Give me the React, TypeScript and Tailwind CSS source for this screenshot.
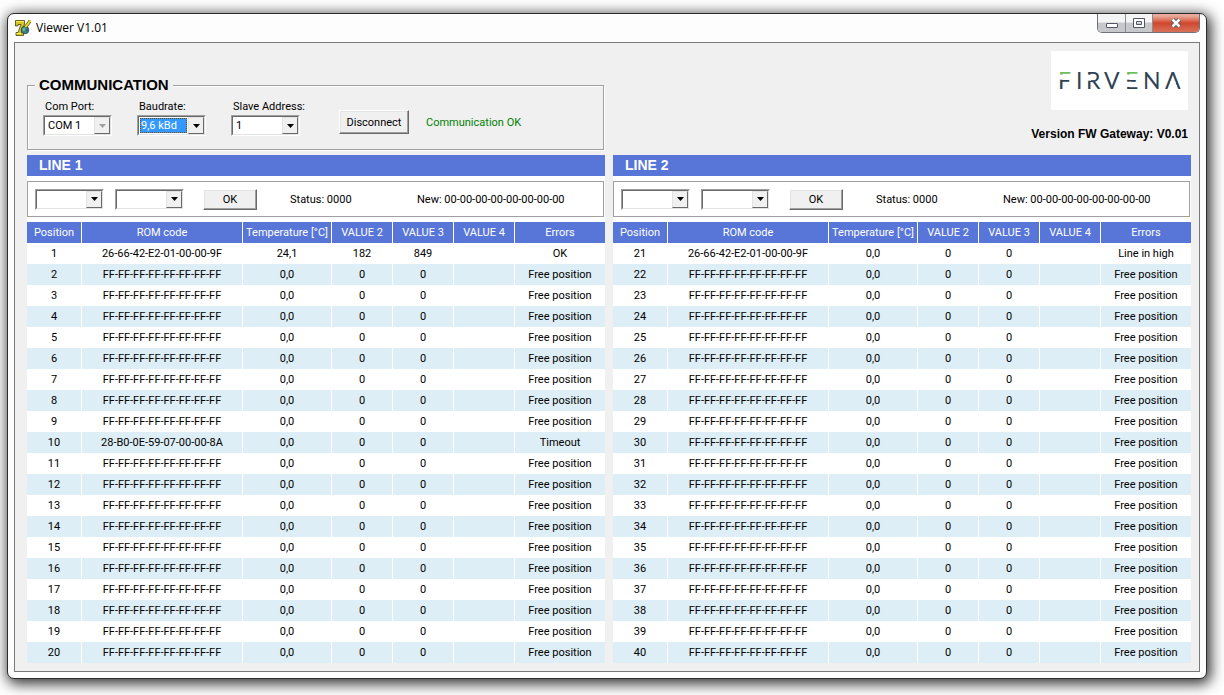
import type { ReactNode } from "react";
import clsx from "clsx";

type Row = {
  position: number;
  rom: string;
  temperature: string;
  value2: string;
  value3: string;
  error: string;
};

const emptyRow = (position: number): Row => ({
  position,
  rom: "FF-FF-FF-FF-FF-FF-FF-FF",
  temperature: "0,0",
  value2: "0",
  value3: "0",
  error: "Free position",
});

const makeRows = (first: number, known: Partial<Row>[]): Row[] =>
  Array.from({ length: 20 }, (_, i) => ({
    ...emptyRow(first + i),
    ...known.find((row) => row.position === first + i),
  }));

const line1 = makeRows(1, [
  {
    position: 1,
    rom: "26-66-42-E2-01-00-00-9F",
    temperature: "24,1",
    value2: "182",
    value3: "849",
    error: "OK",
  },
  { position: 10, rom: "28-B0-0E-59-07-00-00-8A", error: "Timeout" },
]);

const line2 = makeRows(21, [
  { position: 21, rom: "26-66-42-E2-01-00-00-9F", error: "Line in high" },
]);

const columns = [
  { label: "Position", width: "w-[55px]" },
  { label: "ROM code", width: "w-[161px]" },
  { label: "Temperature [°C]", width: "w-[89px]" },
  { label: "VALUE 2", width: "w-[61px]" },
  { label: "VALUE 3", width: "w-[61px]" },
  { label: "VALUE 4", width: "w-[61px]" },
  { label: "Errors", width: "" },
];

const AppIcon = () => (
  <svg className="w-4 h-4" viewBox="0 0 16 16">
    <path
      d="M0.5 0.5H9.500V4L6.500 12.500H8.500V15.500H1V12.500H3L6 4.500H3V6H0.5Z"
      fill="#d9c51f"
      stroke="#4a4310"
      strokeWidth="0.8"
    />
    <path d="M1 1.500H9M1.500 13.500H6" stroke="#f6ee58" />
    <circle cx="10" cy="10" r="3.8" fill="#3d8a80" stroke="#1c3f45" strokeWidth="0.8" />
    <path d="M7.500 9L9.500 7.500L10 10L8.500 11Z" fill="#7cc4a0" />
    <path d="M10.500 9.500L12.500 9L12 12Z" fill="#2b4f8c" />
    <path d="M10.500 7L15.500 0.500" stroke="#4a4310" strokeWidth="3.2" />
    <path d="M10.500 7L15.500 0.500" stroke="#f0e02c" strokeWidth="2" />
  </svg>
);

const Logo = () => (
  <svg
    className="w-[137px] h-[59px] bg-white"
    viewBox="0 0 137 59"
    role="img"
    aria-label="Firvena"
  >
    <defs>
      <linearGradient id="bars" gradientUnits="userSpaceOnUse" x1="0" y1="0" x2="0" y2="59">
        <stop offset="0.43" stopColor="#6fbe5c" />
        <stop offset="0.43" stopColor="#2f4254" />
      </linearGradient>
    </defs>
    <text
      x="7 25 35 53 74 92 114"
      y="38"
      fontFamily="Lato, sans-serif"
      fontSize="23"
      fill="#2f4254"
    >
      <tspan fill="url(#bars)">F</tspan>IRV
      <tspan fill="url(#bars)">E</tspan>NA
    </text>
    {/* gaps that split the F, R and E into bars and open the A */}
    <g fill="#fff">
      <rect x="8" y="23.7" width="5" height="5" />
      <rect x="36" y="23.7" width="4" height="6" />
      <rect x="75" y="23.7" width="5" height="5" />
      <rect x="75" y="30.7" width="5" height="5.200" />
      <path d="M119.500 30.500H124.100L126 35H117.600Z" />
    </g>
  </svg>
);

const DropDown = ({
  id,
  label,
  value,
  disabled,
  focused,
}: {
  id: string;
  label?: string;
  value: string;
  disabled?: boolean;
  focused?: boolean;
}) => (
  <div className="grid w-[69px] h-[21px] border border-t-[#a0a0a0] border-l-[#a0a0a0] border-r-white border-b-white">
    <div className="flex border border-t-[#696969] border-l-[#696969] border-r-[#e3e3e3] border-b-[#e3e3e3] bg-white relative">
      <select
        id={id}
        aria-label={label}
        disabled={disabled}
        defaultValue={value}
        className={clsx(
          "appearance-none min-w-0 grow text-[11px] outline-none opacity-100",
          focused
            ? "m-px mr-[17px] bg-[#3399ff] text-white border border-dotted border-[#7a4a10] leading-[13px]"
            : "pl-[3px] mr-4 text-black leading-[15px]"
        )}
      >
        <option>{value}</option>
      </select>
      <span className="absolute right-0 inset-y-0 w-4 grid place-items-center bg-[#f0f0f0] border border-t-[#e3e3e3] border-l-[#e3e3e3] border-r-[#696969] border-b-[#696969] pointer-events-none">
        <svg className="w-[7px] h-1" viewBox="0 0 7 4">
          <path d="M0 0H7L3.500 4Z" fill={disabled ? "#a0a0a0" : "#000"} />
        </svg>
      </span>
    </div>
  </div>
);

const PushButton = ({ className, children }: { className: string; children: ReactNode }) => (
  <button
    className={clsx(
      "bg-[#f0f0f0] text-[11px] border border-t-white border-l-white border-r-[#696969] border-b-[#696969] shadow-[inset_-1px_-1px_#a0a0a0,inset_1px_1px_#e3e3e3]",
      className
    )}
  >
    {children}
  </button>
);

const Field = ({ id, label, children }: { id: string; label: string; children: ReactNode }) => (
  <div className="w-[69px]">
    <label htmlFor={id} className="block pl-0.5 h-[17px] leading-[17px] whitespace-nowrap">
      {label}
    </label>
    {children}
  </div>
);

const Communication = () => (
  <fieldset className="mr-px mt-[27px] h-[72px] pl-[15px] border border-[#a0a0a0] shadow-[1px_1px_#fff,inset_1px_1px_#fff]">
    <legend className="-ml-2 px-1 text-[15px] leading-[14px] font-bold bg-[#f0f0f0] font-['Liberation_Sans',sans-serif]">
      COMMUNICATION
    </legend>
    <div className="flex items-start pt-1.5">
      <div className="flex gap-[25px]">
        <Field id="port" label="Com Port:">
          <DropDown id="port" value="COM 1" disabled />
        </Field>
        <Field id="baudrate" label="Baudrate:">
          <DropDown id="baudrate" value="9,6 kBd" focused />
        </Field>
        <Field id="address" label="Slave Address:">
          <DropDown id="address" value="1" />
        </Field>
      </div>
      <div className="flex items-center gap-[17px] ml-[39px] mt-3">
        <PushButton className="w-[70px] h-6">Disconnect</PushButton>
        <p className="text-[#008000]">Communication OK</p>
      </div>
    </div>
  </fieldset>
);

const LinePanel = ({ name, rows }: { name: string; rows: Row[] }) => (
  <section className="bg-white">
    <h2 className="h-[21px] pl-3 leading-[21px] text-sm font-bold text-white bg-[#5875d8] font-['Liberation_Sans',sans-serif]">
      {name}
    </h2>
    <div className="flex items-center h-9 my-[5px] mr-px pl-[7px] border border-[#a0a0a0]">
      <div className="flex gap-[11px]">
        <DropDown id={name + "-slot"} label={name + " position"} value="" />
        <DropDown id={name + "-command"} label={name + " command"} value="" />
      </div>
      <PushButton className="w-[54px] h-[21px] ml-[19px]">OK</PushButton>
      <p className="w-[127px] ml-[33px]">Status: 0000</p>
      <p>New: 00-00-00-00-00-00-00-00</p>
    </div>
    <table className="w-full table-fixed border-separate border-spacing-0 text-center">
      <thead>
        <tr className="h-[21px] bg-[#5875d8] text-white">
          {columns.map((column) => (
            <th
              key={column.label}
              className={clsx(
                "p-0 font-normal whitespace-nowrap border-r border-white last:border-r-0",
                column.width
              )}
            >
              {column.label}
            </th>
          ))}
        </tr>
      </thead>
      <tbody>
        {rows.map((row) => (
          <tr key={row.position} className="h-[21px] even:bg-[#ddeef6]">
            {[row.position, row.rom, row.temperature, row.value2, row.value3, "", row.error].map(
              (cell, i) => (
                <td key={i} className="p-0 border-r border-white last:border-r-0">
                  {cell}
                </td>
              )
            )}
          </tr>
        ))}
      </tbody>
    </table>
  </section>
);

const TitleBar = () => (
  <header className="flex justify-between h-7">
    <div className="flex items-center gap-[5px] pl-px">
      <AppIcon />
      <h1 className="text-xs font-['Open_Sans',sans-serif]">Viewer V1.01</h1>
    </div>
    <div className="flex h-[19px] border border-t-0 border-[#70737a] rounded-b-[5px] overflow-hidden">
      <button
        aria-label="Minimize"
        className="w-7 grid place-items-center border-r border-[#8b8e94] bg-linear-to-b from-[#f4f4f5] from-45% to-[#c6c8cb] to-50%"
      >
        <svg className="w-3 h-3" viewBox="0 0 12 12">
          <rect x="0.5" y="6.500" width="11" height="4" rx="0.5" fill="#fff" stroke="#535666" />
        </svg>
      </button>
      <button
        aria-label="Maximize"
        className="w-[27px] grid place-items-center border-r border-[#8b8e94] bg-linear-to-b from-[#f4f4f5] from-45% to-[#c6c8cb] to-50%"
      >
        <svg className="w-3 h-3" viewBox="0 0 12 12">
          <path
            d="M0.500 1.500H11.500V10.500H0.500ZM3.500 4.500H8.500V7.500H3.500Z"
            fill="#fff"
            fillRule="evenodd"
            stroke="#535666"
          />
        </svg>
      </button>
      <button
        aria-label="Close"
        className="w-[46px] grid place-items-center bg-linear-to-b from-[#e8aa9c] from-10% via-[#d0472c] via-50% to-[#d8705a]"
      >
        <svg className="w-3 h-3" viewBox="0 0 12 12">
          <path d="M2.500 2.500L9.500 9.500M9.500 2.500L2.500 9.500" stroke="#535666" strokeWidth="4.500" />
          <path d="M2.500 2.500L9.500 9.500M9.500 2.500L2.500 9.500" stroke="#fff" strokeWidth="2.500" />
        </svg>
      </button>
    </div>
  </header>
);

export default function App() {
  return (
    <div className="min-h-screen bg-white pt-[13px] pl-[7px] pr-[17px] pb-4 overflow-hidden text-[11px] leading-[15px] text-black font-['Roboto',sans-serif]">
      <div className="px-[6px] pb-[6px] bg-[#fdfdfd] border border-[#2b2b2b] rounded-[7px] shadow-[2px_3px_14px_2px_rgba(0,0,0,0.8)]">
        <TitleBar />
        <main className="pt-2 pb-2 pl-3 pr-2 bg-[#f0f0f0] border border-[#7a7a7a]">
          <div className="grid grid-cols-2 gap-x-2">
            <Communication />
            <div className="flex flex-col items-end pr-[3px]">
              <Logo />
              <p className="mt-4 text-xs font-bold font-['Liberation_Sans',sans-serif]">
                Version FW Gateway: V0.01
              </p>
            </div>
          </div>
          <div className="grid grid-cols-2 gap-x-2 mt-[5px]">
            <LinePanel name="LINE 1" rows={line1} />
            <LinePanel name="LINE 2" rows={line2} />
          </div>
        </main>
      </div>
    </div>
  );
}
